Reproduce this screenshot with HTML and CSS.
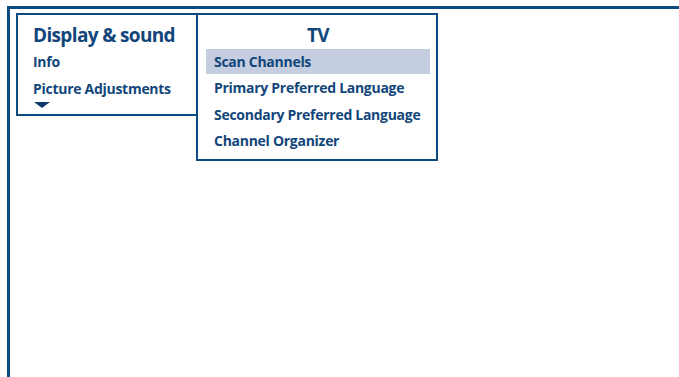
FILE: index.html
```html
<!DOCTYPE html>
<html>
<head>
<meta charset="utf-8">
<link rel="stylesheet" href="styles.css">
</head>
<body>
<div class="frame">
  <div class="menus">
    <div class="panel panel-main">
      <div class="title">Display &amp; sound</div>
      <div class="item">Info</div>
      <div class="item">Picture Adjustments</div>
      <div class="arrow"></div>
    </div>
    <div class="panel panel-tv">
      <div class="title title-center">TV</div>
      <div class="item selected">Scan Channels</div>
      <div class="item">Primary Preferred Language</div>
      <div class="item">Secondary Preferred Language</div>
      <div class="item">Channel Organizer</div>
    </div>
  </div>
</div>
</body>
</html>
```
FILE: styles.css
```css
html, body {
  margin: 0;
  padding: 0;
  background: #ffffff;
  overflow: hidden;
}
body {
  width: 679px;
  height: 377px;
  font-family: "Open Sans", "Noto Sans", sans-serif;
  color: #12467a;
}
.frame {
  margin: 6px 0 0 7px;
  border-top: 3px solid #0d4a80;
  border-left: 3px solid #0d4a80;
  height: 371px;
  padding: 4px 0 0 6px;
  box-sizing: border-box;
}
.menus {
  display: flex;
  align-items: flex-start;
}
.panel {
  border: 2px solid #0d4a80;
  box-sizing: border-box;
  background: #fff;
}
.panel-main {
  width: 182px;
  height: 103px;
  padding: 7px 0 0 15px;
}
.panel-tv {
  width: 242px;
  height: 148px;
  margin-left: -2px;
  padding: 7px 6px 0 8px;
}
.title {
  font-size: 19px;
  font-weight: 700;
  line-height: 26px;
  letter-spacing: -0.65px;
  margin-bottom: 1px;
}
.title-center {
  text-align: center;
}
.item {
  font-size: 14px;
  font-weight: 700;
  line-height: 26.5px;
  letter-spacing: -0.28px;
  white-space: nowrap;
}
.panel-tv .item {
  padding-left: 8px;
}
.selected {
  background: #c5cde0;
  line-height: 25px;
  margin-bottom: 1px;
}
.arrow {
  margin: 0 0 0 1px;
  width: 0;
  height: 0;
  border-left: 8px solid transparent;
  border-right: 8px solid transparent;
  border-top: 6px solid #0d3a6a;
}
```
